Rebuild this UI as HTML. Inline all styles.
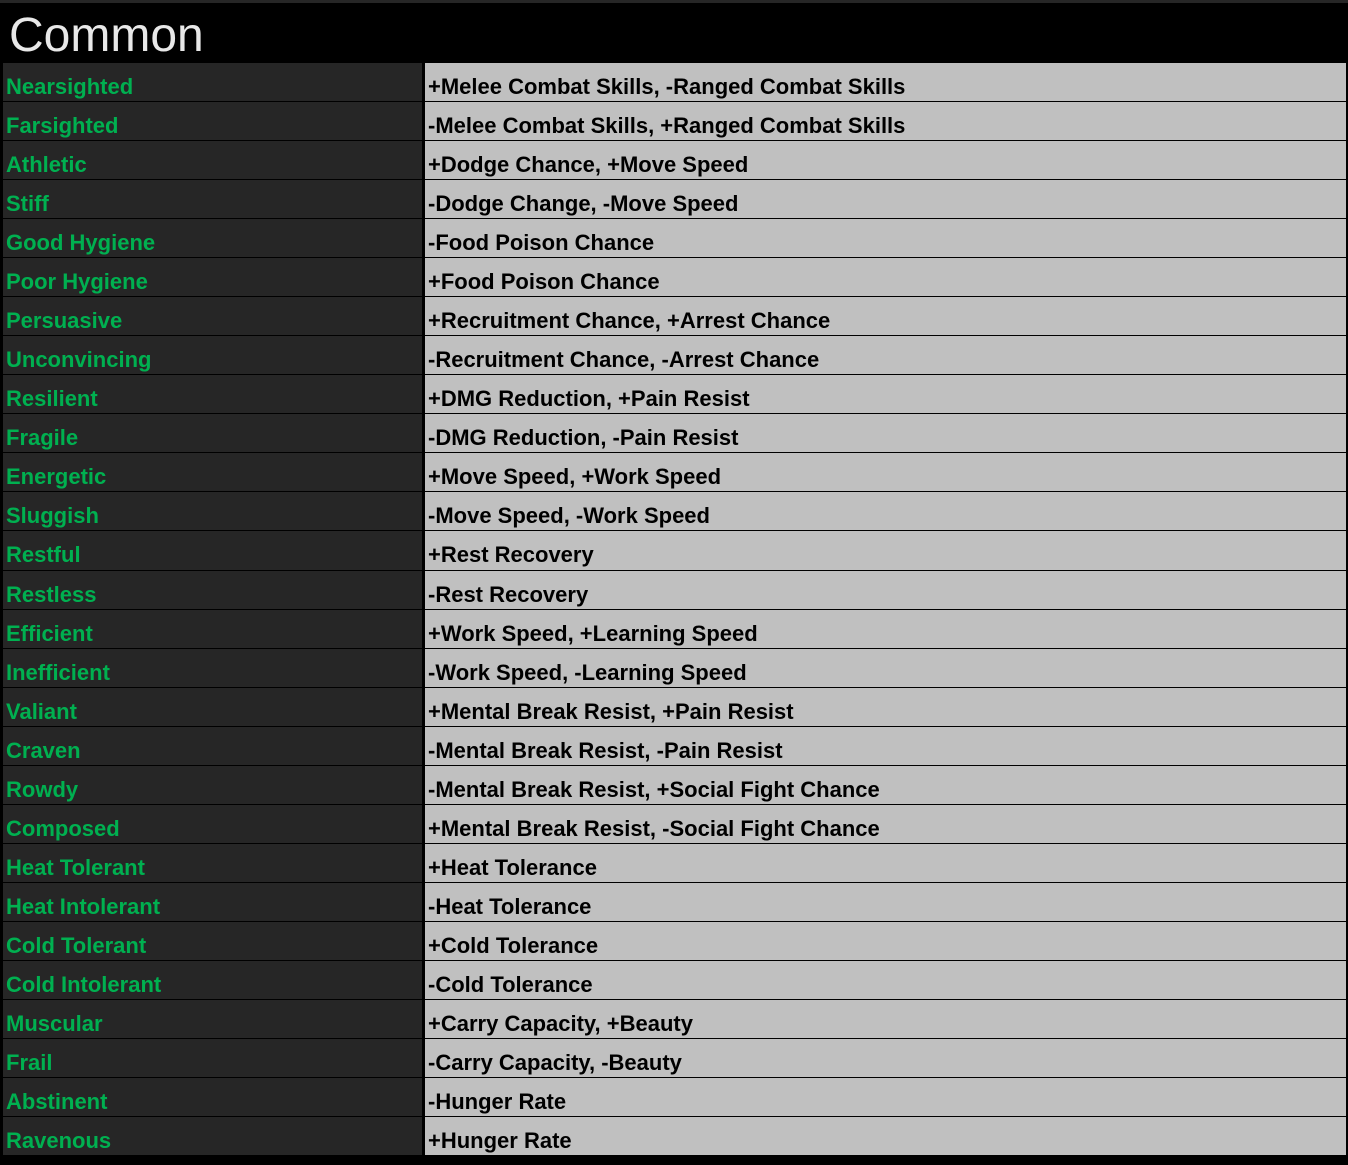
<!DOCTYPE html>
<html><head><style>
*{margin:0;padding:0;box-sizing:border-box}
body{width:1348px;height:1158px;background:#000;position:relative;overflow:hidden;font-family:"Liberation Sans",sans-serif}
.top{position:absolute;left:0;top:0;width:1348px;height:3px;background:#262626}
.title{position:absolute;left:9px;top:8px;font-size:48px;color:#e8e8e8;line-height:56px}
.row{position:absolute;left:3px;width:1343px}
.l{position:absolute;left:0;top:0;width:419px;height:100%;background:#262626;color:#00b050;font-weight:bold;font-size:22px;line-height:48px;padding-left:3px;white-space:nowrap}
.r{position:absolute;left:422px;top:0;width:921px;height:100%;background:#c0c0c0;color:#000;font-weight:bold;font-size:22px;line-height:48px;padding-left:3px;white-space:nowrap}
</style></head><body>
<div class="top"></div>
<div class="title">Common</div>
<div id="t"></div>
<script>
var d=[["Nearsighted","+Melee Combat Skills, -Ranged Combat Skills"],["Farsighted","-Melee Combat Skills, +Ranged Combat Skills"],["Athletic","+Dodge Chance, +Move Speed"],["Stiff","-Dodge Change, -Move Speed"],["Good Hygiene","-Food Poison Chance"],["Poor Hygiene","+Food Poison Chance"],["Persuasive","+Recruitment Chance, +Arrest Chance"],["Unconvincing","-Recruitment Chance, -Arrest Chance"],["Resilient","+DMG Reduction, +Pain Resist"],["Fragile","-DMG Reduction, -Pain Resist"],["Energetic","+Move Speed, +Work Speed"],["Sluggish","-Move Speed, -Work Speed"],["Restful","+Rest Recovery"],["Restless","-Rest Recovery"],["Efficient","+Work Speed, +Learning Speed"],["Inefficient","-Work Speed, -Learning Speed"],["Valiant","+Mental Break Resist, +Pain Resist"],["Craven","-Mental Break Resist, -Pain Resist"],["Rowdy","-Mental Break Resist, +Social Fight Chance"],["Composed","+Mental Break Resist, -Social Fight Chance"],["Heat Tolerant","+Heat Tolerance"],["Heat Intolerant","-Heat Tolerance"],["Cold Tolerant","+Cold Tolerance"],["Cold Intolerant","-Cold Tolerance"],["Muscular","+Carry Capacity, +Beauty"],["Frail","-Carry Capacity, -Beauty"],["Abstinent","-Hunger Rate"],["Ravenous","+Hunger Rate"]];
var h="";for(var i=0;i<d.length;i++){var t=Math.round(63+i*39.04),b=Math.round(63+(i+1)*39.04)-1;h+='<div class="row" style="top:'+t+'px;height:'+(b-t)+'px"><div class="l">'+d[i][0]+'</div><div class="r">'+d[i][1]+'</div></div>';}
document.getElementById("t").innerHTML=h;
</script>
</body></html>
